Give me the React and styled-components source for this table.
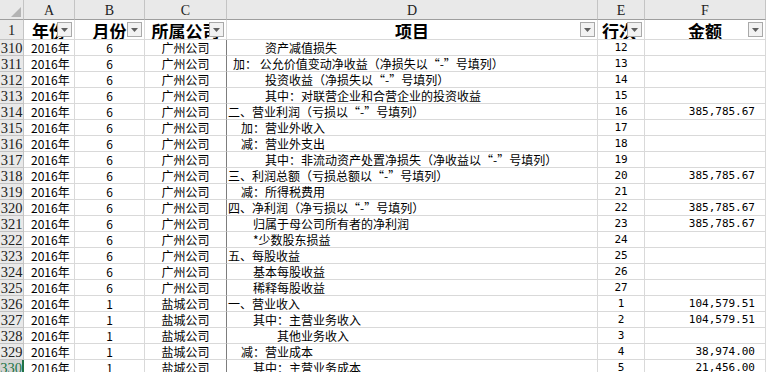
import React from "react";
import styled, { createGlobalStyle } from "styled-components";

const GlobalStyle = createGlobalStyle`
  html, body {
    margin: 0;
    padding: 0;
    background: #ffffff;
    overflow: hidden;
  }
`;

const GRID = "#d9d9d9";
const HEAD_BG = "#e9e9e9";
const HEAD_LINE = "#c4c4c4";

const Sheet = styled.div`
  display: grid;
  grid-template-columns: 24px 51px 70px 82px 371px 47px 121px;
  grid-template-rows: 20px 20px;
  grid-auto-rows: 16px;
  width: 766px;
  height: 372px;
  overflow: hidden;
  font-family: "Noto Sans CJK SC", "Noto Sans", sans-serif;
  color: #000;
`;

const Corner = styled.div`
  background: ${HEAD_BG};
  border-right: 1px solid ${HEAD_LINE};
  border-bottom: 1px solid #9e9e9e;
  box-sizing: border-box;
  display: flex;
  align-items: flex-end;
  justify-content: flex-end;
  padding: 0 2px 2px 0;
`;

const ColHead = styled.div`
  background: ${HEAD_BG};
  border-right: 1px solid ${HEAD_LINE};
  border-bottom: 1px solid #9e9e9e;
  box-sizing: border-box;
  display: flex;
  align-items: center;
  justify-content: center;
  font-family: "Liberation Serif", "DejaVu Serif", serif;
  font-size: 14px;
  color: #222;
  padding-top: 2px;
`;

const RowHead = styled.div`
  background: ${({ $active }) => ($active ? "#d3d3d3" : HEAD_BG)};
  color: ${({ $active }) => ($active ? "#217346" : "#222")};
  border-right: ${({ $active }) =>
    $active ? "2px solid #217346" : `1px solid ${HEAD_LINE}`};
  border-bottom: 1px solid ${HEAD_LINE};
  box-sizing: border-box;
  display: flex;
  align-items: center;
  justify-content: center;
  font-family: "Liberation Serif", "DejaVu Serif", serif;
  font-size: 14.5px;
  line-height: 1;
  overflow: visible;
  white-space: nowrap;
  padding-top: 1px;
`;

const TitleCell = styled.div`
  position: relative;
  border-right: 1px solid ${GRID};
  border-bottom: 1px solid ${GRID};
  box-sizing: border-box;
  display: flex;
  align-items: center;
  justify-content: ${({ $left }) => ($left ? "flex-start" : "center")};
  padding-left: ${({ $left }) => ($left ? "4px" : "0")};
  font-size: 17px;
  font-weight: 700;
  line-height: 1;
  white-space: nowrap;
  overflow: hidden;
  padding-top: 1px;
`;

const FilterButton = styled.div`
  position: absolute;
  right: 2px;
  top: 2px;
  width: 15px;
  height: 15px;
  box-sizing: border-box;
  border: 1px solid #a9a9a9;
  background: #f2f2f2;
  display: flex;
  align-items: center;
  justify-content: center;
`;

const Cell = styled.div`
  border-right: 1px solid ${({ $dark }) => ($dark ? "#7d7d7d" : GRID)};
  border-bottom: 1px solid ${GRID};
  box-sizing: border-box;
  display: flex;
  align-items: center;
  justify-content: ${({ $align }) =>
    $align === "center" ? "center" : $align === "right" ? "flex-end" : "flex-start"};
  padding-left: ${({ $pad }) => ($pad || 0)}px;
  padding-right: ${({ $padR }) => ($padR || 0)}px;
  font-family: ${({ $mono }) =>
    $mono
      ? `"DejaVu Sans Mono", "Liberation Mono", monospace`
      : `"Noto Sans CJK SC", "Noto Sans", sans-serif`};
  font-size: ${({ $mono }) => ($mono ? "11px" : "12px")};
  line-height: 16px;
  white-space: pre;
  overflow: hidden;
`;

const Caret = () => (
  <svg width="7" height="4" viewBox="0 0 7 4">
    <polygon points="0,0 7,0 3.5,4" fill="#5f5f5f" />
  </svg>
);

const SelectAll = () => (
  <svg width="10" height="10" viewBox="0 0 10 10">
    <polygon points="10,0 10,10 0,10" fill="#b4b4b4" />
  </svg>
);

const GZ = ["2016年", "6", "广州公司"];
const YC = ["2016年", "1", "盐城公司"];

const rows = [
  [310, GZ, 38, "资产减值损失", "12", ""],
  [311, GZ, 6, "加： 公允价值变动净收益（净损失以“-”号填列）", "13", ""],
  [312, GZ, 38, "投资收益（净损失以“-”号填列）", "14", ""],
  [313, GZ, 38, "其中：对联营企业和合营企业的投资收益", "15", ""],
  [314, GZ, 1, "二、营业利润（亏损以“-”号填列）", "16", "385,785.67"],
  [315, GZ, 14, "加：营业外收入", "17", ""],
  [316, GZ, 14, "减：营业外支出", "18", ""],
  [317, GZ, 38, "其中：非流动资产处置净损失（净收益以“-”号填列）", "19", ""],
  [318, GZ, 1, "三、利润总额（亏损总额以“-”号填列）", "20", "385,785.67"],
  [319, GZ, 14, "减：所得税费用", "21", ""],
  [320, GZ, 1, "四、净利润（净亏损以“-”号填列）", "22", "385,785.67"],
  [321, GZ, 26, "归属于母公司所有者的净利润", "23", "385,785.67"],
  [322, GZ, 26, "*少数股东损益", "24", ""],
  [323, GZ, 1, "五、每股收益", "25", ""],
  [324, GZ, 26, "基本每股收益", "26", ""],
  [325, GZ, 26, "稀释每股收益", "27", ""],
  [326, YC, 1, "一、营业收入", "1", "104,579.51"],
  [327, YC, 26, "其中：主营业务收入", "2", "104,579.51"],
  [328, YC, 50, "其他业务收入", "3", ""],
  [329, YC, 14, "减：营业成本", "4", "38,974.00"],
  [330, YC, 26, "其中：主营业务成本", "5", "21,456.00"],
];

const letters = ["A", "B", "C", "D", "E", "F"];
const titles = ["年份", "月份", "所属公司", "项目", "行次", "金额"];

const App = () => (
  <>
    <GlobalStyle />
    <Sheet>
      <Corner>
        <SelectAll />
      </Corner>
      {letters.map((l) => (
        <ColHead key={l}>{l}</ColHead>
      ))}

      <RowHead>1</RowHead>
      {titles.map((t, i) => (
        <TitleCell key={t} $left={i === 4}>
          {t}
          <FilterButton>
            <Caret />
          </FilterButton>
        </TitleCell>
      ))}

      {rows.map(([num, [year, month, company], pad, item, line, amount]) => (
        <React.Fragment key={num}>
          <RowHead $active={num === 330}>{num}</RowHead>
          <Cell $pad={7}>{year}</Cell>
          <Cell $align="center">{month}</Cell>
          <Cell $align="center" $dark>
            {company}
          </Cell>
          <Cell $pad={pad}>{item}</Cell>
          <Cell $align="center" $mono>
            {line}
          </Cell>
          <Cell $align="right" $padR={10} $mono>
            {amount}
          </Cell>
        </React.Fragment>
      ))}
    </Sheet>
  </>
);

export default App;
